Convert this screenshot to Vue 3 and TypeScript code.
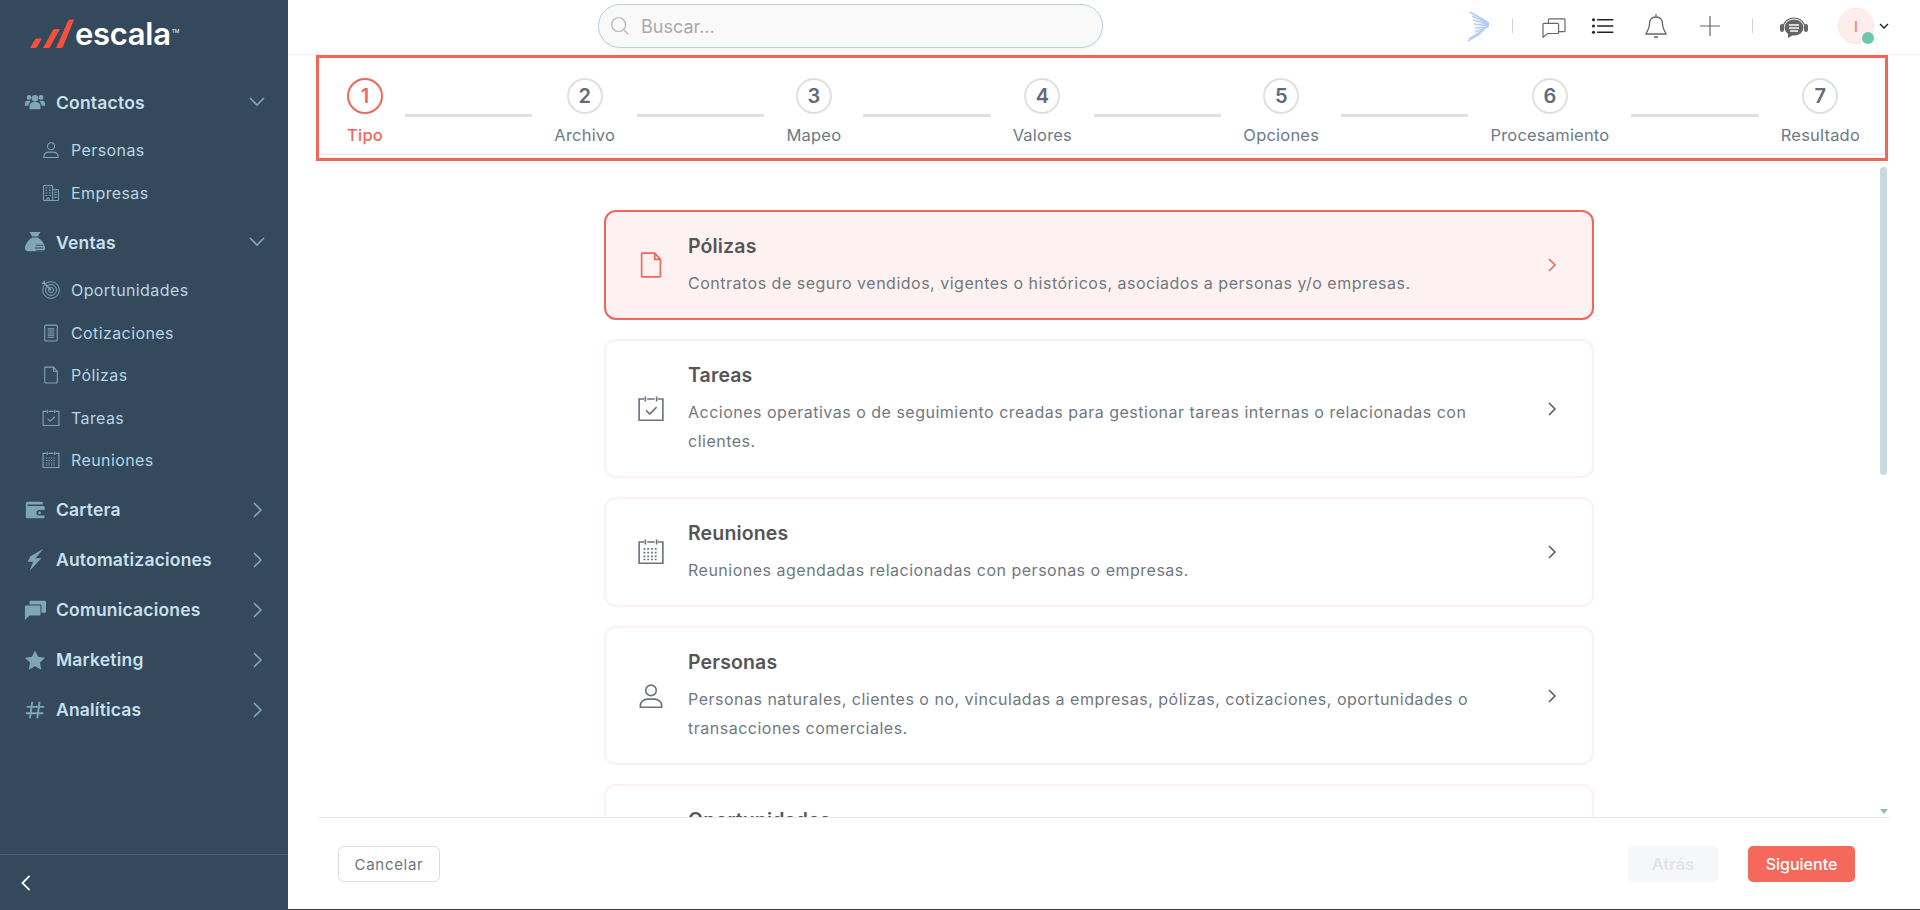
<script setup lang="ts">
type NavChild = { label: string; icon: string }
type NavGroup = { label: string; icon: string; open?: boolean; children?: NavChild[] }
type Option = { title: string; text: string; icon: string; active?: boolean }

const icons: Record<string, string> = {
  people:
    '<circle cx="12" cy="8" r="3.6" fill="currentColor"/><circle cx="5.5" cy="7" r="2.6" fill="currentColor"/><circle cx="18.5" cy="7" r="2.6" fill="currentColor"/><path d="M6 20v-3.5a5 5 0 0 1 5-4.500h2a5 5 0 0 1 5 4.500V20z" fill="currentColor"/><path d="M1 16v-2.500A3.500 3.500 0 0 1 4.500 10.500H7L4.500 16zM23 16v-2.500a3.500 3.500 0 0 0-3.500-3H17l2.500 5.500z" fill="currentColor"/>',
  person:
    '<circle cx="12" cy="7.500" r="4.200" fill="none" stroke="currentColor" stroke-width="1.300"/><path d="M3.500 21v-1.500c0-3 3-5 5.500-5h6c2.500 0 5.500 2 5.500 5V21z" fill="none" stroke="currentColor" stroke-width="1.300"/>',
  building:
    '<path d="M3 21V3h11v18M14 8h7v13H3" fill="none" stroke="currentColor" stroke-width="1.200"/><path d="M5.500 6h2M9.500 6h2M5.500 9h2M9.500 9h2M5.500 12h2M9.500 12h2M5.500 15h2M9.500 15h2M16 11h3M16 14h3M16 17h3M7 21v-3h3v3" fill="none" stroke="currentColor" stroke-width="1.200"/>',
  bag:
    '<path d="M6 1h12l-3 5H9zM9 7h6c3.500 2 7 6 8 11 .3 2-1 4-3 4H4c-2 0-3.300-2-3-4 1-5 4.500-9 8-11z" fill="currentColor"/><path d="M13 15.500h8M12 18.500h9M13 21.500h8" stroke="#34495c" stroke-width="1.100"/>',
  target:
    '<circle cx="12" cy="12" r="10" fill="none" stroke="currentColor" stroke-width="1.200"/><circle cx="12" cy="12" r="6.500" fill="none" stroke="currentColor" stroke-width="1.200"/><circle cx="12" cy="12" r="3" fill="none" stroke="currentColor" stroke-width="1.200"/><path d="M12 12 4 4M4 1v3H1" fill="none" stroke="currentColor" stroke-width="1.800"/>',
  quote:
    '<rect x="4.500" y="2.500" width="15" height="19" rx="1.500" fill="none" stroke="currentColor" stroke-width="1.300"/><path d="M8 7h8M8 9.500h8M8 12h8M8 14.500h8M8 17h8" stroke="currentColor" stroke-width="1.300"/>',
  file:
    '<path d="M5 2.500h10l4.500 5V21a.5.5 0 0 1-.5.5H5a.5.5 0 0 1-.5-.5V3a.5.5 0 0 1 .5-.5zM15 2.500v5h4.500" fill="none" stroke="currentColor" stroke-width="1.300"/>',
  task:
    '<path d="M6.500 4H2.500v17h19V4h-4M9 4h6M7.500 2v4M16.500 2v4" fill="none" stroke="currentColor" stroke-width="1.300"/><path d="m8 13 3 3 5.500-5.500" fill="none" stroke="currentColor" stroke-width="1.300"/>',
  calendar:
    '<path d="M6.500 4H2.500v17h19V4h-4M9 4h6M7.500 2v4M16.500 2v4" fill="none" stroke="currentColor" stroke-width="1.300"/><path d="M6 9.500h12M6 12.500h12M6 15.500h12M6 18h12" stroke="currentColor" stroke-width="1.300" stroke-dasharray="1.500 1.500"/>',
  wallet:
    '<path d="M4 3h15a1.500 1.500 0 0 1 1.500 1.500V6H4.500a.75.75 0 0 0 0 1.500H21a1.500 1.500 0 0 1 1.500 1.500v3h-6a3 3 0 0 0 0 6h6v1.500A1.500 1.500 0 0 1 21 21H3.500A1.500 1.500 0 0 1 2 19.500V5a2 2 0 0 1 2-2z" fill="currentColor"/><circle cx="17" cy="15" r="1.500" fill="currentColor"/>',
  bolt: '<path d="M21 0 7 8 4 14h6L6 24l13-14h-6.500z" fill="currentColor"/>',
  chat:
    '<path d="M7 2h16a1 1 0 0 1 1 1v11a1 1 0 0 1-1 1h-4V7a1 1 0 0 0-1-1H6V3a1 1 0 0 1 1-1z" fill="currentColor"/><path d="M1 8a1 1 0 0 1 1-1h15a1 1 0 0 1 1 1v9a1 1 0 0 1-1 1H6l-5 5z" fill="currentColor"/>',
  star: '<path d="m12 1.500 3.300 7 7.700 1-5.600 5.300 1.400 7.700-6.800-3.700-6.800 3.700 1.400-7.700L1 9.500l7.700-1z" fill="currentColor"/>',
  hash: '<path d="M9 3 6.500 21M17 3l-2.500 18M3 8.500h19M2 15.500h19" fill="none" stroke="currentColor" stroke-width="2"/>'
}

const nav: NavGroup[] = [
  {
    label: 'Contactos',
    icon: 'people',
    open: true,
    children: [
      { label: 'Personas', icon: 'person' },
      { label: 'Empresas', icon: 'building' }
    ]
  },
  {
    label: 'Ventas',
    icon: 'bag',
    open: true,
    children: [
      { label: 'Oportunidades', icon: 'target' },
      { label: 'Cotizaciones', icon: 'quote' },
      { label: 'Pólizas', icon: 'file' },
      { label: 'Tareas', icon: 'task' },
      { label: 'Reuniones', icon: 'calendar' }
    ]
  },
  { label: 'Cartera', icon: 'wallet' },
  { label: 'Automatizaciones', icon: 'bolt' },
  { label: 'Comunicaciones', icon: 'chat' },
  { label: 'Marketing', icon: 'star' },
  { label: 'Analíticas', icon: 'hash' }
]

const steps = ['Tipo', 'Archivo', 'Mapeo', 'Valores', 'Opciones', 'Procesamiento', 'Resultado']

const options: Option[] = [
  {
    title: 'Pólizas',
    text: 'Contratos de seguro vendidos, vigentes o históricos, asociados a personas y/o empresas.',
    icon: 'file',
    active: true
  },
  {
    title: 'Tareas',
    text: 'Acciones operativas o de seguimiento creadas para gestionar tareas internas o relacionadas con clientes.',
    icon: 'task'
  },
  {
    title: 'Reuniones',
    text: 'Reuniones agendadas relacionadas con personas o empresas.',
    icon: 'calendar'
  },
  {
    title: 'Personas',
    text: 'Personas naturales, clientes o no, vinculadas a empresas, pólizas, cotizaciones, oportunidades o transacciones comerciales.',
    icon: 'person'
  },
  {
    title: 'Oportunidades',
    text: 'Negocios en curso asociados a personas o empresas.',
    icon: 'target'
  }
]
</script>

<template>
  <div class="app">
    <aside class="sidebar">
      <div class="logo">
        <svg class="logo-mark" viewBox="0 0 44 30" width="44" height="30">
          <path d="M0 29 5 20.500a2 2 0 0 1 2-1h5L7 28a2 2 0 0 1-2 1z" fill="#f4513a" />
          <path d="M13 29 23 11a2 2 0 0 1 2-1h5L20 28a2 2 0 0 1-2 1z" fill="#f4513a" />
          <path d="M26 29 38 2a3 3 0 0 1 2-1.500h4L33 28a2 2 0 0 1-2 1z" fill="#f4513a" />
        </svg>
        <span class="logo-text">escala</span>
        <span class="logo-tm">TM</span>
      </div>

      <nav class="nav">
        <div v-for="group in nav" :key="group.label" class="nav-group">
          <div class="nav-title">
            <svg class="nav-icon" viewBox="0 0 24 24" v-html="icons[group.icon]"></svg>
            <span>{{ group.label }}</span>
            <svg class="nav-arrow" viewBox="0 0 16 16">
              <path v-if="group.open" d="m1 4 7 7 7-7" />
              <path v-else d="m5 1 7 7-7 7" />
            </svg>
          </div>
          <div v-if="group.children" class="nav-children">
            <div v-for="child in group.children" :key="child.label" class="nav-child">
              <svg class="child-icon" viewBox="0 0 24 24" v-html="icons[child.icon]"></svg>
              <span>{{ child.label }}</span>
            </div>
          </div>
        </div>
      </nav>

      <div class="collapse">
        <svg viewBox="0 0 12 20" width="12" height="18"><path d="M10 2 2 10l8 8" /></svg>
      </div>
    </aside>

    <main class="main">
      <header class="topbar">
        <div class="search">
          <svg viewBox="0 0 24 24" width="22" height="22">
            <circle cx="10.500" cy="10.500" r="7.500" />
            <path d="m16 16 5 5" />
          </svg>
          <span>Buscar...</span>
        </div>

        <div class="tools">
          <svg class="tool wing" viewBox="0 0 24 30">
            <path d="M3 1 22 12M5 5l17 8M6 9l16 5M7 13l15 2M8 17l13-1M8 21l11-4M2 28l15-9M1 30l13-8" />
          </svg>
          <i class="sep sep-a"></i>
          <svg class="tool line-icon chat" viewBox="0 0 28 24">
            <path d="M8 7V3a1 1 0 0 1 1-1h16a1 1 0 0 1 1 1v12a1 1 0 0 1-1 1h-6M3 7h15a1 1 0 0 1 1 1v9a1 1 0 0 1-1 1H7l-5 4V8a1 1 0 0 1 1-1z" />
          </svg>
          <svg class="tool list" viewBox="0 0 24 20">
            <circle cx="2" cy="3" r="1.700" /><circle cx="2" cy="10" r="1.700" /><circle cx="2" cy="17" r="1.700" />
            <path d="M6 3h18M6 10h18M6 17h18" />
          </svg>
          <svg class="tool line-icon bell" viewBox="0 0 24 26">
            <path d="M12 1v3M12 4c-4.500 0-6.500 3-6.500 7 0 6-3.500 8-3.500 10h20c0-2-3.500-4-3.500-10 0-4-2-7-6.500-7zM10 24h4" />
          </svg>
          <svg class="tool line-icon plus" viewBox="0 0 22 22">
            <path d="M11 0v22M0 11h22" />
          </svg>
          <i class="sep sep-b"></i>
          <svg class="tool headset" viewBox="0 0 30 24">
            <path d="M4 12a11 10 0 0 1 22 0" fill="none" stroke="#666" stroke-width="1.200" />
            <rect x="1" y="8" width="4" height="8" rx="2" fill="#666" />
            <rect x="25" y="8" width="4" height="8" rx="2" fill="#666" />
            <ellipse cx="15" cy="11.500" rx="9.500" ry="8" fill="#666" />
            <path d="M9 17v5l5-3z" fill="#666" />
            <path d="M10 9h10M10 12h10M11 15h8" stroke="#fff" stroke-width="1.300" />
          </svg>
          <div class="avatar">
            <span>I</span>
            <i class="status"></i>
          </div>
          <svg class="avatar-arrow" viewBox="0 0 10 6" width="10" height="6"><path d="m1 1 4 4 4-4" /></svg>
        </div>
      </header>

      <section class="frame">
        <div class="stepper">
          <template v-for="(step, i) in steps" :key="step">
            <div v-if="i > 0" class="step-line"></div>
            <div class="step" :class="{ current: i === 0 }">
              <div class="step-num">{{ i + 1 }}</div>
              <div class="step-label">{{ step }}</div>
            </div>
          </template>
        </div>
      </section>

      <section class="content">
        <div class="options">
          <div v-for="item in options" :key="item.title" class="option" :class="{ active: item.active }">
            <svg class="option-icon" viewBox="0 0 24 24" v-html="icons[item.icon]"></svg>
            <div class="option-body">
              <h3>{{ item.title }}</h3>
              <p>{{ item.text }}</p>
            </div>
            <svg class="option-arrow" viewBox="0 0 10 16" width="10" height="16"><path d="m2 2 6 6-6 6" /></svg>
          </div>
        </div>
        <div class="scroll">
          <div class="thumb"></div>
          <i class="scroll-down"></i>
        </div>
      </section>

      <footer class="actions">
        <button class="btn cancel">Cancelar</button>
        <button class="btn back" disabled>Atrás</button>
        <button class="btn next">Siguiente</button>
      </footer>
    </main>
  </div>
</template>

<style>
html,
body {
  margin: 0;
  background: #fff;
}
</style>

<style scoped>
.app {
  display: flex;
  width: 1920px;
  height: 910px;
  overflow: hidden;
  font-family: Inter, "Open Sans", sans-serif;
}

.sidebar {
  width: 288px;
  flex: none;
  display: flex;
  flex-direction: column;
  background: #34495c;
}

.logo {
  display: flex;
  align-items: flex-start;
  height: 77px;
  padding: 19px 0 0 30px;
  box-sizing: border-box;
  color: #fff;
}

.logo-mark {
  flex: none;
}

.logo-text {
  margin: -5px 0 0 1px;
  font-size: 31px;
  line-height: 40px;
  font-weight: 600;
  letter-spacing: -0.3px;
}

.logo-tm {
  font-size: 5px;
  line-height: 8px;
  margin: 8px 0 0 1px;
}

.nav {
  flex: 1;
}

.nav-title {
  display: flex;
  align-items: center;
  height: 50px;
  padding-left: 24px;
  font-size: 17.500px;
  font-weight: 600;
  letter-spacing: 0.2px;
  color: #c6e0ec;
}

.nav-icon {
  width: 22px;
  height: 22px;
  margin-right: 10px;
  color: #7fa6b5;
}

.nav-arrow {
  width: 16px;
  height: 16px;
  margin-left: auto;
  margin-right: 23px;
  fill: none;
  stroke: #7fa6b5;
  stroke-width: 1.6;
}

.nav-children {
  padding: 2px 0 3px;
}

.nav-child {
  display: flex;
  align-items: center;
  height: 42.500px;
  padding-left: 41px;
  font-size: 16px;
  letter-spacing: 0.4px;
  color: #b6d5e2;
}

.child-icon {
  width: 20px;
  height: 20px;
  margin-right: 10px;
  color: #7fa6b5;
}

.collapse {
  height: 55px;
  display: flex;
  align-items: center;
  padding-left: 20px;
  border-top: 1px solid #4f6374;
}

.collapse svg {
  fill: none;
  stroke: #fff;
  stroke-width: 2;
}

.main {
  flex: 1;
  min-width: 0;
  display: flex;
  flex-direction: column;
  border-bottom: 1px solid #3a3f45;
}

.topbar {
  height: 55px;
  flex: none;
  box-sizing: border-box;
  display: flex;
  align-items: flex-start;
  padding: 4px 0 0 310px;
  border-bottom: 1px solid #eceef0;
}

.search {
  width: 505px;
  height: 44px;
  box-sizing: border-box;
  display: flex;
  align-items: center;
  gap: 10px;
  padding-left: 10px;
  border: 1px solid #b9d0dd;
  border-radius: 22px;
  background: #f9f9f9;
  box-shadow: 0 2px 3px rgba(0, 0, 0, 0.05);
  font-size: 18px;
  color: #a9a9a9;
}

.search svg {
  fill: none;
  stroke: #b5b5b5;
  stroke-width: 1.300;
}

.tools {
  display: flex;
  align-items: center;
  margin-left: 364px;
  height: 44px;
}

.tool {
  flex: none;
}

.wing {
  width: 24px;
  height: 30px;
  fill: none;
  stroke: #b4cdf6;
  stroke-width: 1.500;
}

.sep {
  width: 1px;
  height: 14px;
  background: #cfd3d6;
  flex: none;
}

.sep-a {
  margin-left: 21px;
}

.sep-b {
  margin-left: 32px;
}

.line-icon {
  fill: none;
  stroke: #666;
  stroke-width: 1.300;
}

.chat {
  width: 26px;
  height: 22px;
  margin: 4px 0 0 28px;
}

.list {
  width: 23px;
  height: 18px;
  margin-left: 24px;
  fill: #222;
  stroke: #222;
  stroke-width: 1.600;
}

.list circle {
  stroke: none;
}

.bell {
  width: 24px;
  height: 26px;
  margin-left: 30px;
}

.plus {
  width: 20px;
  height: 20px;
  margin-left: 32px;
}

.headset {
  width: 30px;
  height: 24px;
  margin: 4px 0 0 26px;
}

.avatar {
  position: relative;
  width: 36px;
  height: 36px;
  box-sizing: border-box;
  margin-left: 29px;
  display: flex;
  align-items: center;
  justify-content: center;
  border: 1px solid #fde3e0;
  border-radius: 50%;
  background: #fdeeec;
  font-size: 14px;
  font-weight: 600;
  color: #f58b82;
}

.status {
  position: absolute;
  right: -1px;
  bottom: -1px;
  width: 12px;
  height: 12px;
  border-radius: 50%;
  background: #6cc7ae;
}

.avatar-arrow {
  margin-left: 5px;
  fill: none;
  stroke: #222;
  stroke-width: 1.400;
}

.frame {
  flex: none;
  height: 106px;
  box-sizing: border-box;
  margin: 0 32px 0 28px;
  border: 3px solid #f0675a;
}

.stepper {
  height: 97px;
  box-sizing: border-box;
  display: flex;
  align-items: flex-start;
  gap: 22px;
  padding: 20px 25px 0 28px;
  border-bottom: 1px solid #e8eaec;
}

.step {
  display: flex;
  flex-direction: column;
  align-items: center;
}

.step-num {
  width: 36px;
  height: 36px;
  box-sizing: border-box;
  display: flex;
  align-items: center;
  justify-content: center;
  border: 2px solid #e0e0e0;
  border-radius: 50%;
  font-size: 20px;
  font-weight: 600;
  color: #5e6b78;
}

.step-label {
  margin-top: 11px;
  font-size: 16.500px;
  letter-spacing: 0.2px;
  line-height: 20px;
  color: #6d7a87;
}

.current .step-num {
  border-color: #f0675a;
  color: #f0675a;
}

.current .step-label {
  color: #f0675a;
  font-weight: 500;
}

.step-line {
  flex: 1;
  height: 3px;
  margin-top: 36px;
  background: #e0e0e0;
}

.content {
  flex: 1;
  min-height: 0;
  display: flex;
  margin: 0 30px;
  overflow: hidden;
  border-bottom: 1px solid #e8e8e8;
}

.options {
  flex: 1;
  min-width: 0;
  display: flex;
  flex-direction: column;
  align-items: center;
  gap: 19px;
  padding-top: 49px;
}

.option {
  width: 990px;
  flex: none;
  box-sizing: border-box;
  display: flex;
  align-items: center;
  padding: 22px 35px 20px 0;
  border: 2px solid #fdf0ef;
  border-radius: 12px;
  background: #fff;
}

.option.active {
  border-color: #f0675a;
  background: #fef1f1;
}

.option-icon {
  width: 30px;
  height: 30px;
  flex: none;
  margin: 0 22px 2px 30px;
  color: #6b7280;
}

.active .option-icon {
  color: #f0675a;
}

.option-body {
  flex: 1;
  padding-right: 55px;
}

.option h3 {
  margin: 0 0 11px;
  font-size: 19.500px;
  line-height: 24px;
  font-weight: 600;
  letter-spacing: 0.15px;
  color: #555;
}

.option p {
  margin: 0;
  font-size: 16px;
  line-height: 29px;
  letter-spacing: 0.5px;
  color: #707882;
}

.option-arrow {
  flex: none;
  margin-bottom: 2px;
  fill: none;
  stroke: #555f6a;
  stroke-width: 1.600;
}

.active .option-arrow {
  stroke: #f0675a;
}

.scroll {
  width: 10px;
  flex: none;
  position: relative;
}

.thumb {
  width: 7px;
  height: 308px;
  margin-top: 6px;
  border-radius: 4px;
  background: #c8d9e0;
}

.scroll-down {
  position: absolute;
  bottom: 3px;
  left: 0;
  border: 4px solid transparent;
  border-top: 5px solid #9ab9c4;
  border-bottom: 0;
}

.actions {
  height: 91px;
  flex: none;
  box-sizing: border-box;
  display: flex;
  align-items: flex-start;
  padding: 28px 65px 0 50px;
}

.btn {
  height: 36px;
  box-sizing: border-box;
  border: 0;
  border-radius: 5px;
  font-family: inherit;
  font-size: 16px;
  font-weight: 500;
}

.cancel {
  width: 102px;
  border: 1px solid #dcdcdc;
  border-radius: 6px;
  background: #fff;
  color: #6d7580;
  font-size: 15px;
  font-weight: 400;
  letter-spacing: 0.7px;
}

.back {
  width: 90px;
  margin-left: auto;
  background: #f6f7f9;
  color: #e4e4e6;
  font-size: 16.500px;
  font-weight: 600;
}

.next {
  width: 107px;
  margin-left: 30px;
  background: #f4695b;
  color: #fff;
}
</style>
